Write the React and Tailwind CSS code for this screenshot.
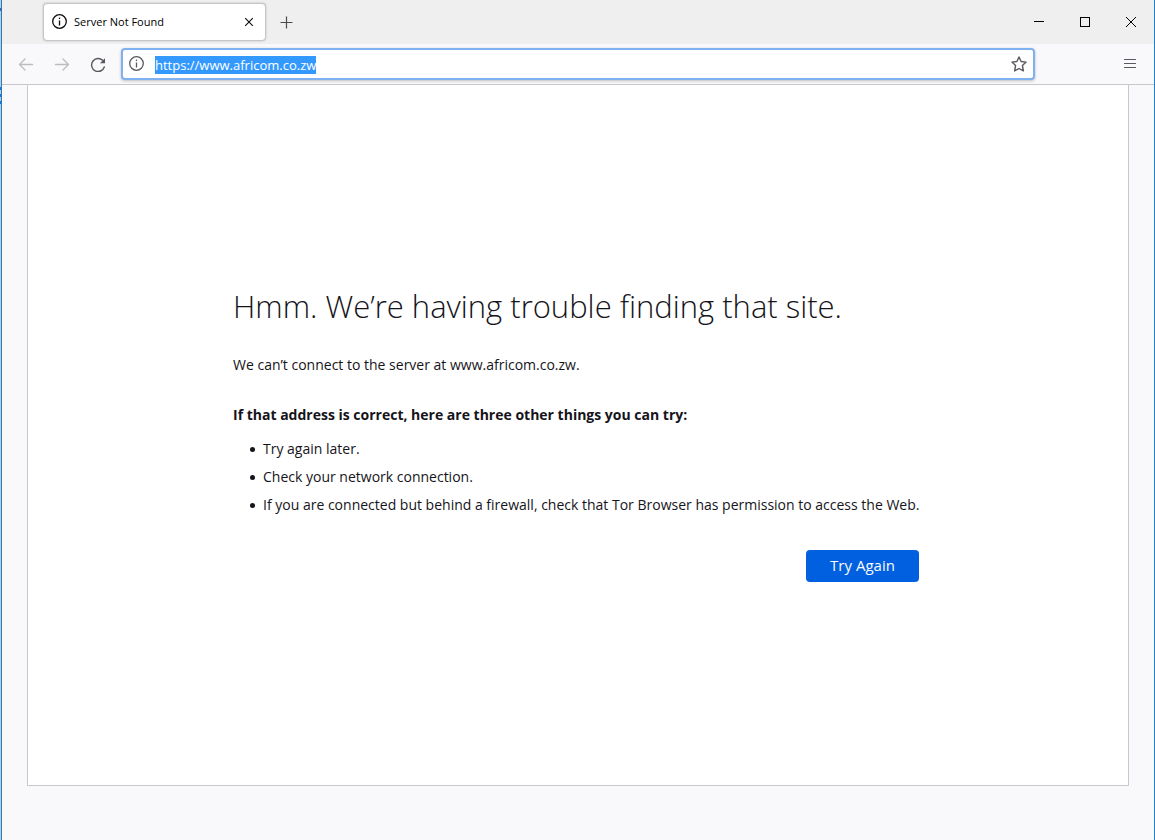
import React, { useEffect, useRef } from 'react';

function InfoIcon({ className }) {
  return (
    <svg viewBox="0 0 16 16" className={className} fill="none" stroke="currentColor">
      <circle cx="7.500" cy="7.500" r="6.800" strokeWidth="1.3" />
      <path d="M7.500 6.500v5" strokeWidth="1.3" />
      <path d="M7.500 3.600v1.500" strokeWidth="1.3" />
    </svg>
  );
}

function TabBar() {
  return (
    <div className="flex h-11 items-start bg-[#efefef] pl-[41px] text-[#0c0c0d]">
      <div className="mt-[3px] flex h-[38px] w-[223px] items-center rounded border border-[#c6c6c8] bg-white pl-2 pr-2 shadow-[0_0_2px_rgba(0,0,0,0.25)]">
        <InfoIcon className="h-4 w-4" />
        <span className="ml-1.5 flex-1 text-[11px] leading-4 text-black">Server Not Found</span>
        <button aria-label="Close tab" className="flex h-4 w-4 items-center justify-center">
          <svg viewBox="0 0 10 10" className="h-2.5 w-2.5" stroke="currentColor" strokeWidth="1.1">
            <path d="M1.200 1.200l7.600 7.600M8.800 1.200L1.200 8.800" />
          </svg>
        </button>
      </div>
      <button aria-label="New tab" className="ml-2.5 flex h-11 w-5 items-center justify-center text-[#4a4a4f]">
        <svg viewBox="0 0 13 13" className="h-[13px] w-[13px]" stroke="currentColor" strokeWidth="1.2">
          <path d="M6.500 0.500v12M0.500 6.500h12" />
        </svg>
      </button>

      {/* Window buttons */}
      <div className="ml-auto flex h-11 text-black">
        <button aria-label="Minimize" className="flex w-[46px] items-center justify-center">
          <svg viewBox="0 0 10 10" className="h-2.5 w-2.5" stroke="currentColor" shapeRendering="crispEdges">
            <path d="M0 4.500h10" />
          </svg>
        </button>
        <button aria-label="Maximize" className="flex w-[46px] items-center justify-center">
          <svg viewBox="0 0 10 10" className="h-2.5 w-2.5" fill="none" stroke="currentColor" shapeRendering="crispEdges">
            <path d="M0.500 0.500h9v9h-9z" />
          </svg>
        </button>
        <button aria-label="Close" className="flex w-[46px] items-center justify-center">
          <svg viewBox="0 0 10 10" className="h-2.5 w-2.5" stroke="currentColor">
            <path d="M0 0l10 10M10 0L0 10" />
          </svg>
        </button>
      </div>
    </div>
  );
}

function Toolbar() {
  const urlRef = useRef(null);

  // the address is focused and fully selected after a failed load
  useEffect(() => {
    urlRef.current.focus();
    urlRef.current.select();
  }, []);

  return (
    <div className="flex h-[41px] items-center border-b border-[#c8c8cc] bg-[#f9f9fb] pl-4 pr-4 text-[#58585f]">
      <button aria-label="Back" className="h-4 w-4 text-[#bcbcc0]">
        <svg viewBox="0 0 16 16" className="h-4 w-4" fill="none" stroke="currentColor" strokeWidth="1.3" strokeLinecap="round" strokeLinejoin="round">
          <path d="M14.500 8.500H1.500M7 3L1.500 8.500L7 14" />
        </svg>
      </button>
      <button aria-label="Forward" className="ml-5 h-4 w-4 text-[#bcbcc0]">
        <svg viewBox="0 0 16 16" className="h-4 w-4" fill="none" stroke="currentColor" strokeWidth="1.3" strokeLinecap="round" strokeLinejoin="round">
          <path d="M1.500 8.500h13M9 3L14.500 8.500L9 14" />
        </svg>
      </button>
      <button aria-label="Reload" className="ml-5 h-4 w-4">
        <svg viewBox="0 0 16 16" className="h-4 w-4" fill="none" stroke="currentColor" strokeWidth="1.400" strokeLinecap="round">
          <path d="M14.300 11A6.500 6.500 0 1 1 12.600 4.300" />
          <path d="M15 2.200v4.700a.4.4 0 0 1-.4.4H9.900z" fill="currentColor" stroke="none" />
        </svg>
      </button>
      <div className="ml-[15px] flex h-8 flex-1 items-center rounded-sm border-2 border-[#7fb0f0] bg-white pl-1.5 pr-1.5 shadow-[0_1px_3px_rgba(0,0,0,0.25)]">
        <InfoIcon className="h-4 w-4" />
        <input
          ref={urlRef}
          type="text"
          aria-label="Address"
          defaultValue="https://www.africom.co.zw"
          spellCheck={false}
          className="ml-2.5 h-5 min-w-0 flex-1 bg-transparent pt-0.5 text-[13px] text-[#0c0c0d] outline-none selection:bg-[#3399ff] selection:text-white"
        />
        <button aria-label="Bookmark this page" className="h-4 w-4">
          <svg viewBox="0 0 16 16" className="h-4 w-4" fill="none" stroke="currentColor" strokeWidth="1.400" strokeLinejoin="round">
            <path d="M8 1l2.100 4.500 5 .6-3.700 3.400 1 5.400L8 12.500l-4.400 2.400 1-5.400L.9 6.100l5-.6z" />
          </svg>
        </button>
      </div>
      <button aria-label="Open menu" className="ml-[87px] h-4 w-4">
        <svg viewBox="0 0 16 16" className="h-4 w-4" stroke="currentColor" strokeWidth="1.2" strokeLinecap="round">
          <path d="M2.500 3.500h11M2.500 7.500h11M2.500 11.500h11" />
        </svg>
      </button>
    </div>
  );
}

const tips = [
  "Try again later.",
  "Check your network connection.",
  "If you are connected but behind a firewall, check that Tor Browser has permission to access the Web.",
];

function ErrorPage() {
  return (
    <main className="mx-[25px] mb-[54px] flex flex-1 items-center justify-center border border-t-0 border-[#c8c8cc] bg-white text-sm text-[#15141a]">
      <div className="w-full max-w-[690px] pb-0.5">
        <h1 className="text-[31px] font-light leading-10">Hmm. We’re having trouble finding that site.</h1>
        <p className="mt-[27px] leading-6">We can’t connect to the server at www.africom.co.zw.</p>
        <p className="mt-[26px] font-bold leading-6">If that address is correct, here are three other things you can try:</p>
        <ul className="mt-2 pl-[17px] leading-7">
          {tips.map((tip) => (
            <li
              key={tip}
              className="flex items-center gap-2 before:h-[5px] before:w-[5px] before:shrink-0 before:rounded-full before:bg-current before:content-['']"
            >
              {tip}
            </li>
          ))}
        </ul>
        <div className="mt-[31px] flex justify-end pr-1">
          <button className="h-8 w-[113px] rounded bg-[#0060df] text-[15px] text-[#fbfbfe]">Try Again</button>
        </div>
      </div>
    </main>
  );
}

export default function App() {
  return (
    <div className="flex min-h-screen bg-[#c9c9cd] font-['Open_Sans',sans-serif]">
      {/* Sliver of the window behind */}
      <div aria-hidden="true" className="flex w-px flex-col gap-1 pt-2">
        <div className="h-[3px] bg-[#5b5b94]" />
        <div className="mt-[72px] h-[3px] bg-[#2b6fd0]" />
        <div className="h-[3px] bg-[#2b6fd0]" />
        <div className="h-[3px] bg-[#2b6fd0]" />
      </div>
      <div className="flex min-w-0 flex-1 flex-col border-x border-[#1e7fcb] bg-[#f9f9fb]">
        <TabBar />
        <Toolbar />
        <ErrorPage />
      </div>
    </div>
  );
}
